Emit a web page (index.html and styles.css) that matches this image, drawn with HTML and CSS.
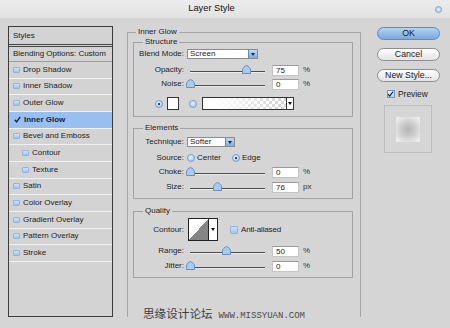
FILE: index.html
```html
<!DOCTYPE html>
<html lang="en">
<head>
  <meta charset="UTF-8">
  <title>Layer Style</title>
  <link rel="stylesheet" href="styles.css">
</head>
<body>
  <div class="titlebar">
    <span class="title">Layer Style</span>
    <span class="close"></span>
  </div>

  <div class="dialog">
    <!-- 样式列表 -->
    <div class="styles-list">
      <div class="list-head">Styles</div>
      <div class="list-blend">Blending Options: Custom</div>
      <div class="list-item"><span class="cb"></span>Drop Shadow</div>
      <div class="list-item"><span class="cb"></span>Inner Shadow</div>
      <div class="list-item"><span class="cb"></span>Outer Glow</div>
      <div class="list-item active">
        <svg class="tick" width="7" height="7" viewBox="0 0 7 7"><path d="M0.8 3.8L2.6 5.8L6.3 0.8" fill="none" stroke="#14244a" stroke-width="1.4"/></svg>Inner Glow
      </div>
      <div class="list-item"><span class="cb"></span>Bevel and Emboss</div>
      <div class="list-item sub"><span class="cb"></span>Contour</div>
      <div class="list-item sub"><span class="cb"></span>Texture</div>
      <div class="list-item"><span class="cb"></span>Satin</div>
      <div class="list-item"><span class="cb"></span>Color Overlay</div>
      <div class="list-item"><span class="cb"></span>Gradient Overlay</div>
      <div class="list-item"><span class="cb"></span>Pattern Overlay</div>
      <div class="list-item"><span class="cb"></span>Stroke</div>
    </div>

    <!-- 内发光设置 -->
    <fieldset class="outer">
      <legend>Inner Glow</legend>

      <fieldset class="group structure">
        <legend>Structure</legend>
        <div class="row h10">
          <span class="lbl">Blend Mode:</span>
          <div class="select blend"><span class="value">Screen</span><span class="drop"></span></div>
        </div>
        <div class="row h12 mt5">
          <span class="lbl">Opacity:</span>
          <div class="slider"><span class="thumb" style="left: 75%"><svg width="9" height="9" viewBox="0 0 9 9"><path d="M0.5 8.5V5C0.5 3.2 2.4 1.2 4.5 0.5C6.6 1.2 8.5 3.2 8.5 5V8.5Z" fill="#a9cbef" stroke="#6791c2"/></svg></span></div>
          <div class="num">75</div><span class="unit">%</span>
        </div>
        <div class="row h12 mt2">
          <span class="lbl">Noise:</span>
          <div class="slider"><span class="thumb" style="left: 0%"><svg width="9" height="9" viewBox="0 0 9 9"><path d="M0.5 8.5V5C0.5 3.2 2.4 1.2 4.5 0.5C6.6 1.2 8.5 3.2 8.5 5V8.5Z" fill="#a9cbef" stroke="#6791c2"/></svg></span></div>
          <div class="num">0</div><span class="unit">%</span>
        </div>
        <div class="row color-row">
          <span class="radio on"></span>
          <span class="swatch"></span>
          <span class="radio"></span>
          <div class="gradient"><span class="grad-fill"></span><span class="arrow"></span></div>
        </div>
      </fieldset>

      <fieldset class="group elements">
        <legend>Elements</legend>
        <div class="row h10">
          <span class="lbl">Technique:</span>
          <div class="select technique"><span class="value">Softer</span><span class="drop"></span></div>
        </div>
        <div class="row h10 mt6">
          <span class="lbl">Source:</span>
          <span class="radio"></span><span class="opt center">Center</span>
          <span class="radio on"></span><span class="opt">Edge</span>
        </div>
        <div class="row h12 mt3">
          <span class="lbl">Choke:</span>
          <div class="slider"><span class="thumb" style="left: 0%"><svg width="9" height="9" viewBox="0 0 9 9"><path d="M0.5 8.5V5C0.5 3.2 2.4 1.2 4.5 0.5C6.6 1.2 8.5 3.2 8.5 5V8.5Z" fill="#a9cbef" stroke="#6791c2"/></svg></span></div>
          <div class="num">0</div><span class="unit">%</span>
        </div>
        <div class="row h12 mt3">
          <span class="lbl">Size:</span>
          <div class="slider"><span class="thumb" style="left: 36%"><svg width="9" height="9" viewBox="0 0 9 9"><path d="M0.5 8.5V5C0.5 3.2 2.4 1.2 4.5 0.5C6.6 1.2 8.5 3.2 8.5 5V8.5Z" fill="#a9cbef" stroke="#6791c2"/></svg></span></div>
          <div class="num">76</div><span class="unit">px</span>
        </div>
      </fieldset>

      <fieldset class="group quality">
        <legend>Quality</legend>
        <div class="row contour-row">
          <span class="lbl">Contour:</span>
          <div class="contour"><span class="curve"></span><span class="arrow"></span></div>
          <span class="cb big"></span><span class="opt anti">Anti-aliased</span>
        </div>
        <div class="row h12 mt4">
          <span class="lbl">Range:</span>
          <div class="slider"><span class="thumb" style="left: 49%"><svg width="9" height="9" viewBox="0 0 9 9"><path d="M0.5 8.5V5C0.5 3.2 2.4 1.2 4.5 0.5C6.6 1.2 8.5 3.2 8.5 5V8.5Z" fill="#a9cbef" stroke="#6791c2"/></svg></span></div>
          <div class="num">50</div><span class="unit">%</span>
        </div>
        <div class="row h12 mt3">
          <span class="lbl">Jitter:</span>
          <div class="slider"><span class="thumb" style="left: 0%"><svg width="9" height="9" viewBox="0 0 9 9"><path d="M0.5 8.5V5C0.5 3.2 2.4 1.2 4.5 0.5C6.6 1.2 8.5 3.2 8.5 5V8.5Z" fill="#a9cbef" stroke="#6791c2"/></svg></span></div>
          <div class="num">0</div><span class="unit">%</span>
        </div>
      </fieldset>

      <div class="watermark"><span class="wm-cn">思缘设计论坛</span><span class="wm-en">WWW.MISSYUAN.COM</span></div>
    </fieldset>

    <!-- 按钮 -->
    <div class="actions">
      <div class="btn btn-ok">OK</div>
      <div class="btn">Cancel</div>
      <div class="btn">New Style...</div>
      <div class="preview-row">
        <span class="check"><svg width="8" height="8" viewBox="0 0 8 8"><path d="M1.2 4.2L3.1 6.4L6.9 1.2" fill="none" stroke="#15284d" stroke-width="1.4"/></svg></span>
        <span>Preview</span>
      </div>
      <div class="preview-box"><span class="preview-swatch"></span></div>
    </div>
  </div>
</body>
</html>
```

FILE: styles.css
```css
/* 基础样式 */
* {
  box-sizing: border-box;
  margin: 0;
  padding: 0;
}

body {
  font-family: 'Liberation Sans', Arial, sans-serif;
  font-size: 8px;
  line-height: 1;
  color: #1c1c1c;
  background-color: #d5d5d5;
  width: 450px;
  height: 328px;
  overflow: hidden;
}

/* 标题栏 */
.titlebar {
  display: flex;
  align-items: center;
  height: 18px;
  background: linear-gradient(#ececec, #e2e2e2);
}

.title {
  flex: 1;
  text-align: center;
  padding-right: 12px;
  font-size: 9.3px;
  color: #111;
}

.close {
  width: 7px;
  height: 7px;
  margin-right: 8px;
  border-radius: 50%;
  border: 1px solid #7ea3cc;
  background: radial-gradient(circle, #eef5fc 0, #b4cfee 70%);
}

/* 对话框 */
.dialog {
  display: flex;
  align-items: flex-start;
  padding: 8px 0 0 8px;
}

/* 样式列表 */
.styles-list {
  width: 105px;
  height: 291px;
  border: 1px solid #3c3c3c;
  background-color: #d3d3d3;
}

.list-head {
  height: 20px;
  padding: 0 4px;
  line-height: 17px;
  border-bottom: 3px double #454545;
}

.list-blend {
  height: 15px;
  padding: 0 4px;
  line-height: 14px;
  border-bottom: 1px solid #9d9d9d;
}

.list-item {
  display: flex;
  align-items: center;
  height: 16.67px;
  padding-left: 4px;
  border-bottom: 1px solid #f1f1f1;
}

.list-item.sub {
  padding-left: 13px;
}

.list-item.active {
  background-color: #98bff0;
  color: #14244a;
  font-weight: bold;
}

.tick {
  margin: 0 3px 0 1px;
}

.cb {
  width: 7px;
  height: 6px;
  margin-right: 3px;
  border: 1px solid #8fb4de;
  border-radius: 1px;
  background: linear-gradient(#cfe2f7, #9fc3ea);
}

/* 分组框 */
fieldset {
  min-width: 0;
  margin: 0;
}

.outer {
  width: 234px;
  height: 291px;
  margin-left: 14px;
  padding: 0 7px 0 5px;
  border: 1px solid #a6a6a6;
  border-bottom: none;
}

.outer > legend {
  margin-left: 3px;
  padding: 0 2px;
  line-height: 12px;
}

.group {
  border: 1px solid #a2a2a2;
  padding: 0;
}

.group > legend {
  margin-left: 9px;
  padding: 0 2px;
  line-height: 8px;
}

.structure {
  padding: 3px 0 6px;
}

.elements {
  margin-top: 7px;
  padding: 5px 0 5px;
}

.quality {
  margin-top: 8px;
  padding: 3px 0 5px;
}

/* 行 */
.row {
  display: flex;
  align-items: center;
}

.h10 { height: 10px; }
.h12 { height: 12px; }
.mt2 { margin-top: 2px; }
.mt3 { margin-top: 3px; }
.mt4 { margin-top: 4px; }
.mt5 { margin-top: 5px; }
.mt6 { margin-top: 6px; }

.lbl {
  flex: 0 0 50px;
  margin-right: 3px;
  text-align: right;
  color: #1e1e1e;
}

/* 下拉框 */
.select {
  display: flex;
  height: 10px;
  border: 1px solid #8c8c8c;
  background-color: #fff;
}

.select.blend {
  width: 71px;
}

.select.technique {
  width: 48px;
}

.select .value {
  flex: 1;
  padding-left: 2px;
  line-height: 8px;
}

.drop {
  display: flex;
  align-items: center;
  justify-content: center;
  width: 9px;
  border-left: 1px solid #5d89bd;
  background: linear-gradient(#c0d9f4, #7eaddf);
}

.drop::after {
  content: '';
  border-top: 3px solid #17284c;
  border-left: 2.5px solid transparent;
  border-right: 2.5px solid transparent;
}

/* 滑块 */
.slider {
  position: relative;
  width: 75px;
  height: 1px;
  margin: 3px 0 0 3px;
  background-color: #4d4d4d;
  box-shadow: 0 1px 0 #ececec;
}

.thumb {
  position: absolute;
  top: -6px;
  margin-left: -4.5px;
  width: 9px;
  height: 9px;
}

.thumb svg {
  display: block;
}

.num {
  width: 27px;
  height: 11px;
  margin-left: 7px;
  padding-left: 3px;
  line-height: 10px;
  background-color: #fff;
  border: 1px solid #c4c4c4;
  border-top-color: #9a9a9a;
}

.unit {
  margin-left: 4px;
  color: #333;
}

/* 单选按钮 */
.radio {
  position: relative;
  width: 8px;
  height: 8px;
  border-radius: 50%;
  border: 1px solid #739ecf;
  background: radial-gradient(circle at 40% 35%, #e4f0fc, #9ec4ec);
}

.radio.on::after {
  content: '';
  position: absolute;
  top: 2px;
  left: 2px;
  width: 2px;
  height: 2px;
  border-radius: 50%;
  background-color: #111;
}

.opt {
  margin-left: 2px;
  white-space: nowrap;
}

.opt.center {
  margin-right: 11px;
}

/* 颜色行 */
.color-row {
  height: 13px;
  margin-top: 7px;
  padding-left: 21px;
}

.swatch {
  width: 12px;
  height: 13px;
  margin: 0 10px 0 4px;
  border: 1px solid #333;
  background-color: #fff;
}

.gradient {
  display: flex;
  width: 92px;
  height: 13px;
  margin-left: 5px;
  border: 1px solid #333;
}

.grad-fill {
  flex: 1;
  background:
    linear-gradient(to right, #fff 15%, rgba(255, 255, 255, 0)),
    repeating-conic-gradient(#d2d2d2 0 25%, #fff 0 50%) 0 0 / 6px 6px;
}

.arrow {
  display: flex;
  align-items: center;
  justify-content: center;
  width: 7px;
  border-left: 1px solid #333;
  background-color: #fff;
}

.arrow::after {
  content: '';
  border-top: 3px solid #111;
  border-left: 2px solid transparent;
  border-right: 2px solid transparent;
}

/* 等高线 */
.contour-row {
  height: 23px;
}

.contour {
  display: flex;
  width: 30px;
  height: 23px;
  margin-left: 1px;
  border: 1px solid #222;
}

.curve {
  flex: 1;
  background: linear-gradient(to bottom right, #fff 50%, #858585 50%);
}

.contour .arrow {
  width: 9px;
  border-left-color: #222;
}

.cb.big {
  width: 8px;
  height: 8px;
  margin: 0 0 0 12px;
}

.opt.anti {
  margin-left: 3px;
  letter-spacing: -0.15px;
}

/* 水印 */
.watermark {
  display: flex;
  align-items: baseline;
  margin: 29px 0 0 10px;
  line-height: 12px;
  color: #3e3e3e;
}

.wm-cn {
  font-family: 'Noto Sans CJK SC', sans-serif;
  font-size: 11.6px;
}

.wm-en {
  margin-left: 6px;
  font-family: 'Liberation Mono', monospace;
  font-size: 9px;
  color: #4a4a4a;
}

/* 按钮区域 */
.actions {
  width: 63px;
  margin-left: 16px;
}

.btn {
  height: 13px;
  margin-top: 8px;
  border: 1px solid #8d8d8d;
  border-radius: 7px;
  background: linear-gradient(#fdfdfd, #e4e4e4);
  text-align: center;
  font-size: 8.8px;
  line-height: 11px;
  color: #1a1a1a;
}

.btn-ok {
  margin-top: 1px;
  border-color: #5f8bbd;
  background: linear-gradient(#b3d3f4, #79a9de);
}

.preview-row {
  display: flex;
  align-items: center;
  height: 10px;
  margin-top: 7px;
  padding-left: 10px;
  font-size: 8.4px;
}

.check {
  display: flex;
  width: 8px;
  height: 8px;
  margin-right: 3px;
  border: 1px solid #6f95c2;
  background: linear-gradient(#eef5fd, #b9d3ef);
}

.check svg {
  margin: -1px 0 0 -1px;
}

.preview-box {
  display: flex;
  align-items: center;
  justify-content: center;
  width: 48px;
  height: 48px;
  margin: 6px 0 0 7px;
  border: 1px solid #bcbcbc;
}

.preview-swatch {
  width: 24px;
  height: 25px;
  background: radial-gradient(circle, #b4b4b4 0, #c8c8c8 35%, #ebebeb 85%);
}
```
